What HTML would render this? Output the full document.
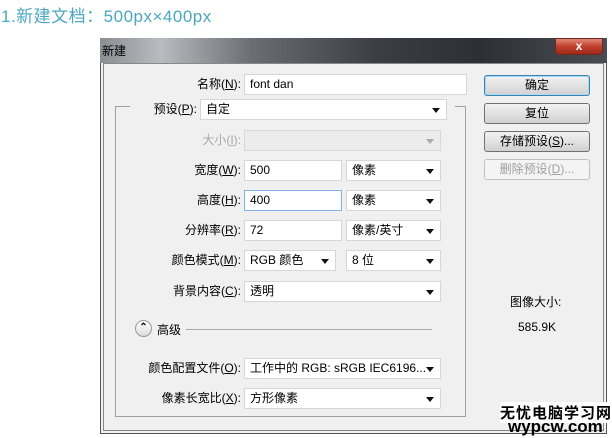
<!DOCTYPE html><html><head><meta charset="utf-8"><style>
*{box-sizing:border-box;margin:0;padding:0}
body{width:612px;height:438px;background:#fff;position:relative;overflow:hidden;font-family:"Liberation Sans","Microsoft YaHei","Noto Sans CJK SC",sans-serif;font-size:12px;color:#000}
.a{position:absolute}
.lbl{position:absolute;text-align:right;width:140px;line-height:21px}
.in{position:absolute;background:#fff;border:1px solid #d6d6d6;height:21px;line-height:19px;padding-left:5px}
.sel:after{content:"";position:absolute;right:6px;top:8px;border-left:4px solid transparent;border-right:4px solid transparent;border-top:5px solid #111}
.dis{background:#ececec;border-color:#d8d8d8}
.dis:after{border-top-color:#aaa}
.btn{position:absolute;left:484px;width:106px;height:21px;border:1px solid #707070;border-radius:3px;background:linear-gradient(#f2f2f2,#e2e2e2 50%,#d0d0d0);text-align:center;line-height:19px}
u{text-decoration:underline}
</style></head><body>
<div class="a" style="left:1px;top:2px;font-size:17px;color:#4aa7bf;letter-spacing:0.5px">1.新建文档：500px×400px</div>
<div class="a" style="left:100px;top:38px;width:507px;height:396px;background:#f0f0f0;border:1px solid #555"></div>
<div class="a" style="left:100px;top:38px;width:507px;height:25px;background:linear-gradient(90deg,#8a8e92 0%,#b8bcc0 12%,#6a6e74 30%,#3a3e44 55%,#2c3036 75%,#4a4e54 100%)"></div>
<div class="a" style="left:102px;top:42px;color:#000;font-size:12px">新建</div>
<div class="a" style="left:555px;top:38px;width:48px;height:17px;background:linear-gradient(#e08878,#c0402c 50%,#a02818);border:1px solid #6a2a20;border-radius:0 0 4px 4px;color:#fff;text-align:center;font-weight:bold;line-height:15px">x</div>
<div class="a" style="left:103px;top:63px;width:501px;height:368px;border:1px solid #888;background:#f0f0f0"></div>
<div class="a" style="left:115px;top:106px;width:351px;height:311px;border:1px solid #a0a0a0"></div>
<div class="a" style="left:130px;top:100px;width:325px;height:14px;background:#f0f0f0"></div>
<div class="lbl" style="left:101px;top:74px">名称(<u>N</u>):</div>
<div class="in" style="left:244px;top:74px;width:223px">font dan</div>
<div class="lbl" style="left:57px;top:99px">预设(<u>P</u>):</div>
<div class="in sel" style="left:200px;top:99px;width:247px">自定</div>
<div class="lbl" style="left:101px;top:130px;color:#a8a8a8">大小(<u>I</u>):</div>
<div class="in sel dis" style="left:244px;top:130px;width:197px"></div>
<div class="lbl" style="left:101px;top:160px">宽度(<u>W</u>):</div>
<div class="in" style="left:244px;top:160px;width:98px">500</div>
<div class="in sel" style="left:346px;top:160px;width:95px">像素</div>
<div class="lbl" style="left:101px;top:190px">高度(<u>H</u>):</div>
<div class="in" style="left:244px;top:190px;width:98px;border-color:#7eb4ea">400</div>
<div class="in sel" style="left:346px;top:190px;width:95px">像素</div>
<div class="lbl" style="left:101px;top:220px">分辨率(<u>R</u>):</div>
<div class="in" style="left:244px;top:220px;width:98px">72</div>
<div class="in sel" style="left:346px;top:220px;width:95px">像素/英寸</div>
<div class="lbl" style="left:101px;top:250px">颜色模式(<u>M</u>):</div>
<div class="in sel" style="left:244px;top:250px;width:92px">RGB 颜色</div>
<div class="in sel" style="left:346px;top:250px;width:95px">8 位</div>
<div class="lbl" style="left:101px;top:281px">背景内容(<u>C</u>):</div>
<div class="in sel" style="left:244px;top:281px;width:197px">透明</div>
<div class="a" style="left:135px;top:320px;width:17px;height:17px;border-radius:50%;border:1px solid #999;background:linear-gradient(#fff,#ddd);text-align:center;font-size:10px;line-height:14px;font-weight:bold">⌃</div>
<div class="a" style="left:157px;top:321px">高级</div>
<div class="a" style="left:186px;top:329px;width:246px;height:1px;background:#a8a8a8"></div>
<div class="lbl" style="left:101px;top:358px">颜色配置文件(<u>O</u>):</div>
<div class="in sel" style="left:244px;top:358px;width:197px">工作中的 RGB: sRGB IEC6196...</div>
<div class="lbl" style="left:101px;top:388px">像素长宽比(<u>X</u>):</div>
<div class="in sel" style="left:244px;top:388px;width:197px">方形像素</div>
<div class="btn" style="top:75px;border-color:#3c7fb1;box-shadow:inset 0 0 0 1px #9fdcf5">确定</div>
<div class="btn" style="top:103px">复位</div>
<div class="btn" style="top:131px">存储预设(<u>S</u>)...</div>
<div class="btn" style="top:159px;color:#a0a0a0;border-color:#c0c0c0;background:#f4f4f4">删除预设(<u>D</u>)...</div>
<div class="a" style="left:510px;top:293px">图像大小:</div>
<div class="a" style="left:518px;top:320px">585.9K</div>
<div class="a" style="left:500px;top:402px;font-size:15px;font-weight:bold;background:#fff;letter-spacing:1px">无忧电脑学习网</div>
<div class="a" style="left:508px;top:418px;font-size:17px;font-weight:bold;line-height:17px">wypcw.com</div>
</body></html>
